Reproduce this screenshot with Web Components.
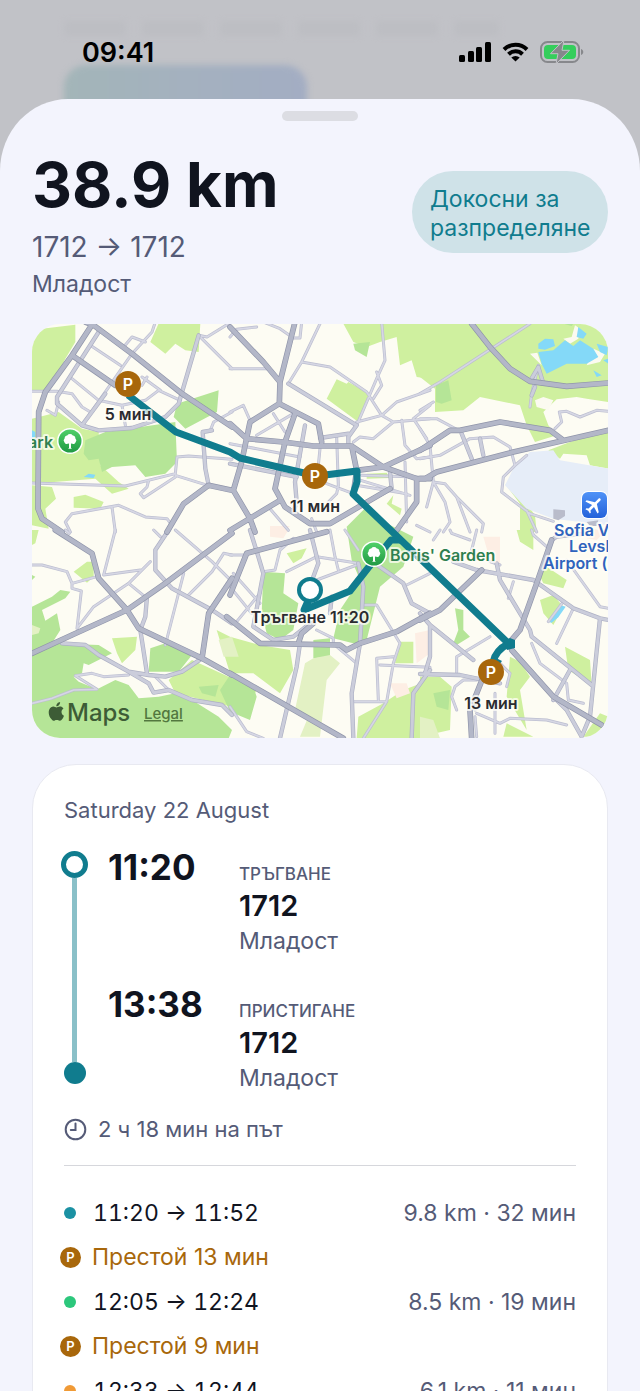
<!DOCTYPE html>
<html lang="bg">
<head>
<meta charset="UTF-8">
<meta name="viewport" content="width=device-width, initial-scale=1">
<title>Пътуване</title>
<style>
  body {
    margin: 0;
    font-family: Inter, "Noto Sans", sans-serif;
    --ink: #10141f;
    --muted: #555b77;
    --teal: #107c8e;
    --amber: #a8670b;
    --page: #f3f4fd;
  }
</style>
</head>
<body>
<trip-screen>
  <status-bar slot="status" time="09:41"></status-bar>
  <trip-header distance="38.9 km" route="1712 → 1712" area="Младост">Докосни за разпределяне</trip-header>
  <trip-map></trip-map>
  <trip-card date="Saturday 22 August" duration="2 ч 18 мин на път">
    <trip-point slot="point" time="11:20" label="Тръгване" place="1712" area="Младост"></trip-point>
    <trip-point slot="point" time="13:38" label="Пристигане" place="1712" area="Младост"></trip-point>
    <trip-leg color="#1b91a3" times="11:20 → 11:52">9.8 km · 32 мин</trip-leg>
    <trip-stop>Престой 13 мин</trip-stop>
    <trip-leg color="#2cc77c" times="12:05 → 12:24">8.5 km · 19 мин</trip-leg>
    <trip-stop>Престой 9 мин</trip-stop>
    <trip-leg color="#f09a36" times="12:33 → 12:44">6.1 km · 11 мин</trip-leg>
  </trip-card>
</trip-screen>

<script>
// Map geometry. Every tile is 200x210 and is drawn in thirds of a unit.
const TILES = [
  {
    x: 32, y: 322,
    light: ['0,60 30,20 130,8 130,60 100,110 70,170 40,205 0,205', '380,4 505,4 500,90 460,85 430,65 400,95 355,60', '0,290 80,270 150,320 200,330 205,430 260,480 290,500 240,515 190,470 0,485', '125,525 160,518 215,540 205,560 125,557', '0,490 60,495 72,530 40,560 50,620 0,610'],
    mid: ['160,355 220,330 430,300 435,420 400,455 340,465 310,430 240,435 210,450 200,410 170,415 155,395', '435,245 560,205 555,270 460,320 425,285'],
    water: ['155,465 170,455 190,458 185,468', '0,325 10,330 10,345 0,350'],
    minor: ['370,0 360,30 300,95 150,310', '175,70 265,130', '275,75 300,45 340,60', '120,170 200,235 270,250 340,235 380,205 445,235', '330,165 385,205', '270,250 280,310', '0,208 75,208 120,215 150,255 175,270', '0,483 280,492 430,455 435,405 470,402 600,412', '430,460 520,488', '350,475 345,495 325,515 335,527 430,465', '115,630 100,600 120,575 260,550 340,585 405,590 420,610', '240,555 250,630', '500,40 560,100 600,140', '500,40 525,45 590,5', '45,265 70,280 80,240', '535,325 545,300 600,270', '345,165 330,190'],
    medium: ['200,30 75,225 75,245 150,310 200,325 300,318 400,285 440,245 500,40', '530,490 520,440 512,330 540,325', '220,215 150,310'],
    major: ['180,8 120,100 40,210 20,270 18,560 30,590 90,630', '160,0 185,10 300,95 450,215 600,315', '120,100 250,190', '405,630 455,545 530,490 600,505'],
  },
  {
    x: 230, y: 322,
    light: ['340,5 600,5 600,170 560,165 545,115 510,130 500,45 450,60 410,75 370,60', '410,455 470,452 480,468 410,470', '490,520 470,545 510,580 515,560 485,545', '320,172 350,185 355,180 418,215 385,300 290,230'],
    mid: ['370,65 420,60 410,105 375,85'],
    pink: ['120,612 180,612 160,630 120,630'],
    minor: ['270,5 215,120 175,185', '215,120 300,135 410,210 455,280 490,300 600,290', '455,0 465,115 440,170 380,310', '440,150 455,190 430,230', '0,140 110,140', '0,45 20,22 80,15', '100,0 150,20 190,48 210,48 215,0', '0,270 40,250 60,295', '80,340 190,275', '130,275 165,330', '380,300 455,280 500,240 600,205', '370,360 390,345 430,350 490,300', '515,295 525,370 560,410 600,405', '550,290 590,350', '550,290 600,250', '270,380 260,480', '320,345 325,490', '375,470 540,520', '380,490 530,515', '395,460 560,465', '525,420 530,600', '250,470 370,515', '295,540 320,515 325,490', '120,560 175,625', '560,610 600,630', '245,590 260,630', '0,365 210,405'],
    medium: ['175,185 380,310 355,345 355,372', '270,348 355,335', '225,310 195,480 200,540 190,570', '0,425 200,465', '480,450 485,500 400,545'],
    major: ['0,15 100,120 150,180', '195,0 175,80 150,180 148,245 60,300 35,420 10,505 60,590 75,630', '148,245 265,305 275,360', '0,305 50,350 160,360 250,372 365,372 460,435 560,470 600,470', '195,275 165,360 135,500 165,555 240,605 300,605 480,500', '0,625 150,535', '380,445 460,435 600,370', '365,372 380,445 370,515', '560,470 560,540 500,625'],
  },
  {
    x: 420, y: 322,
    light: ['0,5 565,5 565,240 500,230 470,225 410,232 370,270 385,310 410,340 345,360 320,310 300,250 180,225 130,265 45,270 45,200 0,165', '385,385 450,360 565,320 565,440 510,430 500,400 430,395 420,410', '255,485 320,545 345,580 350,630 300,630 300,545', '285,440 320,395 325,415 300,450'],
    mid: ['48,190 85,175 95,235 65,245 48,240', '430,5 460,5 455,12'],
    land: ['465,10 480,20 475,50 450,65 430,50 455,45', '330,95 352,92 365,130', '520,80 555,95 540,120 500,130', '370,225 400,235 385,265 350,255 345,235'],
    airport: ['330,390 400,385 420,415 565,440 565,610 400,590 320,560 255,490 285,430'],
    water: ['355,90 400,85 435,55 460,72 480,55 520,80 535,105 500,125 440,125 380,155 365,125', '355,65 375,50 400,52 405,72 375,83 355,80', '475,15 500,35 490,50 470,45', '530,65 565,75 560,100 540,90', '520,145 545,160 530,165', '550,115 565,110 565,125'],
    pink: ['500,630 520,620 560,630'],
    minor: ['330,5 60,180 0,215', '0,290 50,290 125,330', '355,130 335,215 330,255', '0,265 40,240', '405,320 425,300 418,270 440,268 480,285 530,265 565,268', '0,410 60,400 150,350 220,345 270,375 285,430', '320,400 285,430 250,465 245,510 330,575 400,598', '320,565 350,630', '0,320 30,370 40,480 75,540 90,600 70,630', '40,480 20,555', '40,480 75,485 110,525 190,605 185,630', '110,525 150,630'],
    medium: ['125,335 155,410', '180,350 190,400', '355,135 330,178', '355,135 370,185', '345,195 335,220'],
    building: ['400,562 435,565 435,582 415,595 400,590', '500,600 535,595 530,612 510,612'],
    major: ['155,5 210,75 270,140 330,178 440,193 565,183', '0,470 15,470 50,450 280,390 565,325', '0,385 90,325 120,325 240,300 390,325 430,355'],
  },
  {
    x: 32, y: 530,
    light: ['125,125 165,95 185,95 185,140 165,158', '240,325 315,320 310,360 270,400 255,370', '480,390 590,440 680,470 640,540 430,490 410,450', '0,0 20,0 10,40 0,45'],
    mid: ['0,375 0,230 60,200 85,180 115,185 100,205 30,240 40,272 75,250 85,300 60,340 200,345 240,370 170,405 155,400 150,430 125,440 140,455 195,478 250,450 290,465 320,505 380,500 430,490 480,510 560,560 600,600 590,625 0,625', '355,355 400,340 480,375 440,425 350,425', '500,470 560,465 550,500 510,490', '0,135 10,140 0,150'],
    olive: ['560,330 600,320 620,380 575,380', '0,285 25,295 20,310 0,315'],
    minor: ['0,105 30,105 105,125 120,160 195,140', '120,160 120,175 148,183 135,295 185,230 290,160 355,95', '250,0 215,135 325,120', '290,160 345,205', '455,130 400,345', '430,0 540,95 600,155', '600,75 575,70 540,125 465,200', '365,0 385,20', '0,520 60,505 125,480 195,478 130,437 180,430 215,440 290,435', '370,440 410,480', '100,0 112,10'],
    medium: ['410,0 370,60 370,120 420,175 540,240 600,280', '345,200 340,260 325,300 345,430', '90,340 160,345 200,375 290,425 350,435 400,440 450,425 510,385', '290,425 350,460 365,488 410,480 480,510 570,525 600,555'],
    major: ['70,0 180,70 200,145 285,240 320,295 510,385 600,435', '0,370 120,315 285,240 400,160 600,10', '600,145 530,250 510,385'],
  },
  {
    x: 230, y: 530,
    light: ['170,70 230,55 215,85 190,100', '-40,300 0,320 90,345 180,360 190,420 150,490 70,430 0,430', '385,560 460,520 520,480 600,450 600,625 380,625', '510,335 550,335 550,400 495,400'],
    mid: ['100,125 165,130 160,190 205,220 190,300 150,330 110,310 95,250', '350,-10 410,-70 450,-30 550,20 520,110 450,170 410,330 390,345 310,325 330,240 390,150 365,90', '0,435 70,470 80,500 60,570 0,545 -30,480', '250,330 300,325 300,380 250,385'],
    olive: ['225,400 250,385 300,375 330,400 290,450 270,620 210,620 235,560 195,540'],
    pink: ['120,0 175,0 160,25 120,20', '480,460 530,460 540,490 500,505', '555,310 600,300 600,370 560,400'],
    minor: ['190,25 150,60 135,120 100,125', '170,125 260,80 385,100', '260,150 380,105', '300,0 315,80 325,120', '0,75 50,75', '345,0 385,60', '10,130 90,220', '0,170 65,250', '90,190 20,275', '400,225 440,225 510,340 490,400 470,515 370,515', '445,510 440,385 490,380', '450,405 600,412', '320,350 380,400', '470,515 400,625', '0,530 50,605 100,625', '600,130 530,165', '260,300 310,325 310,345'],
    medium: ['240,0 265,100 250,140', '60,0 85,80 100,130 70,290 130,330 190,320 240,280', '210,340 200,410 150,625', '385,100 400,170 390,340 365,490 370,625', '600,420 550,490 545,625', '420,90 520,160 545,220 600,250', '300,250 305,200'],
    major: ['0,430 340,625', '-10,260 90,340 330,345 350,360 390,340 500,305 600,250', '0,195 50,70 290,5', '205,340 215,310 250,280'],
  },
  {
    x: 420, y: 530,
    light: ['290,0 340,0 340,60 300,35', '380,110 440,150 430,175 370,160 355,130', '360,210 400,195 430,230 400,285 370,250', '435,350 510,390 515,465 445,420', '270,380 300,395 330,440 300,480 320,600 260,500', '540,550 565,560 565,620 490,620', '260,580 340,620 250,620', '0,440 60,440 95,470 90,600 0,620'],
    mid: ['105,235 130,240 130,300 150,320 110,345 100,340 115,300', '40,490 90,480 85,540 50,530'],
    olive: ['0,560 40,570 60,625 0,625'],
    pink: ['0,310 20,310 20,370 0,380', '190,20 240,20 240,100 210,90', '490,0 560,0 530,30 500,25'],
    water: ['383,275 400,250 410,245 420,225 437,230 415,262 395,278'],
    minor: ['280,155 265,205', '430,215 385,275', '460,235 410,340', '335,340 360,400 440,460 445,510 490,520', '210,320 110,380 110,430', '110,540 95,500 105,470 130,450 170,450', '240,400 270,430 260,470', '170,495 165,540', '225,490 225,610', '170,550 240,580 270,565 380,570 440,585', '240,105 210,95', '90,0 95,10 150,30', '155,60 170,0', '380,50 340,15 335,0', '440,90 540,230 565,235', '165,560 170,620', '60,0 40,30'],
    medium: ['100,95 170,120 340,150 460,235 540,265 565,270', '540,265 510,560 485,620', '230,100 240,150 330,300 335,320 515,465', '0,250 30,285 160,390', '30,285 30,380 15,430', '0,432 120,435 240,460', '395,30 410,20 500,10', '450,420 400,510', '400,500 440,540 485,620'],
    major: ['395,30 350,160 300,300 270,335 275,360 400,500 545,585', '0,270 60,240 185,120', '155,625 150,540 190,440'],
  },
];

const AREA_FILLS = { light: '#cff09f', mid: '#b5e597', olive: '#e3f1c4', pink: '#fdeee4', airport: '#e6edf8', land: '#fbfaf0', water: '#84d9f8', building: '#b9bccb' };
const ROAD_STYLES = {
  minor: { edge: '#bcbed0', fill: '#d6d7e4', width: 9 },
  medium: { edge: '#adb0c4', fill: '#cbcddb', width: 13 },
  major: { edge: '#9095aa', fill: '#b3b7c8', width: 17 },
};

function tilePath(tile, points, attrs) {
  const d = points.map(p => 'M' + p).join('');
  return `<path transform="translate(${tile.x} ${tile.y}) scale(.33333)" d="${d}" ${attrs}/>`;
}

function drawAreas() {
  let out = '';
  for (const [kind, fill] of Object.entries(AREA_FILLS)) {
    for (const tile of TILES) {
      if (tile[kind]) out += tilePath(tile, tile[kind].map(p => p + 'Z'), `fill="${fill}"`);
    }
  }
  return out;
}

function drawRoads() {
  let out = '';
  for (const [kind, road] of Object.entries(ROAD_STYLES)) {
    for (const tile of TILES) {
      out += tilePath(tile, tile[kind], `stroke="${road.edge}" stroke-width="${road.width}"`);
    }
    for (const tile of TILES) {
      out += tilePath(tile, tile[kind], `stroke="${road.fill}" stroke-width="${road.width - 4}"`);
    }
  }
  return `<g fill="none" stroke-linejoin="round" stroke-linecap="round">${out}</g>`;
}

class TripScreen extends HTMLElement {
  constructor() {
    super();
    this.attachShadow({ mode: 'open' });
    this.shadowRoot.innerHTML = `
      <style>
        :host {
          display: flex;
          flex-direction: column;
          position: relative;
          height: 100vh;
          overflow: hidden;
          background: #c1c2c7;
        }
        .behind {
          position: absolute;
          filter: blur(3px);
        }
        .tile {
          left: 10%;
          top: 65px;
          width: 38%;
          height: 90px;
          border-radius: 22px;
          background: linear-gradient(90deg, #a3b5b8, #a4b1bf 50%, #a3adc3);
        }
        .line {
          left: 10%;
          top: 21px;
          width: 68%;
          height: 15px;
          background: repeating-linear-gradient(90deg, #b9babf 0 62px, transparent 62px 78px);
          opacity: .5;
        }
        main {
          position: relative;
          flex: 1;
          min-height: 0;
          overflow: hidden;
          border-radius: 68px 68px 0 0 / 72px 72px 0 0;
          background: var(--page);
        }
        .grabber {
          width: 76px;
          height: 10px;
          margin: 12px auto 0;
          border-radius: 5px;
          background: #dcdde3;
        }
        .content {
          display: flex;
          flex-direction: column;
          gap: 26px;
          padding: 32px;
        }
      </style>
      <div class="behind line"></div>
      <div class="behind tile"></div>
      <slot name="status"></slot>
      <main>
        <div class="grabber"></div>
        <div class="content"><slot></slot></div>
      </main>
    `;
  }
}

class StatusBar extends HTMLElement {
  connectedCallback() {
    this.attachShadow({ mode: 'open' });
    this.shadowRoot.innerHTML = `
      <style>
        :host {
          display: flex;
          position: relative;
          justify-content: space-between;
          align-items: center;
          height: 99px;
          box-sizing: border-box;
          padding: 5px 56px 0 82px;
          color: #000;
          font-size: 27px;
          font-weight: 600;
        }
        .icons { display: flex; align-items: center; gap: 11px; }
        svg { display: block; }
      </style>
      <span>${this.getAttribute('time')}</span>
      <div class="icons">
        <svg width="32" height="20" viewBox="0 0 32 20">
          <rect x="0" y="13" width="6" height="7" rx="1.5"/>
          <rect x="9" y="9" width="6" height="11" rx="1.5"/>
          <rect x="17" y="5" width="6" height="15" rx="1.5"/>
          <rect x="26" y="0" width="6" height="20" rx="1.5"/>
        </svg>
        <svg width="27" height="20" viewBox="0 0 27 20">
          <path d="M2 7.5a16.5 16.5 0 0 1 23 0M6.5 12.2a10 10 0 0 1 14 0" fill="none" stroke="#000" stroke-width="4"/>
          <path d="M13.5 19.5 9.3 15.6a6 6 0 0 1 8.4 0z"/>
        </svg>
        <svg width="44" height="24" viewBox="0 0 44 24">
          <rect x="1" y="2" width="38" height="20" rx="6.5" fill="none" stroke="#87888c" stroke-width="2"/>
          <rect x="4" y="5" width="32" height="14" rx="4" fill="#35ce5c"/>
          <path d="M41 9c3 1 3 5 0 6z" fill="#87888c"/>
          <path d="M24 0 10.5 13.7H18L16 24l13.5-13.7H22z" fill="#87888c" stroke="#c1c2c7" stroke-width="1"/>
        </svg>
      </div>
    `;
  }
}

class TripHeader extends HTMLElement {
  connectedCallback() {
    this.attachShadow({ mode: 'open' });
    this.shadowRoot.innerHTML = `
      <style>
        :host {
          display: flex;
          justify-content: space-between;
          align-items: flex-start;
          color: var(--muted);
        }
        h1 {
          margin: 0;
          color: var(--ink);
          font-size: 62px;
          line-height: 64px;
          font-weight: 700;
        }
        p { margin: 0; font-size: 23px; line-height: 28px; }
        .route { margin: 12px 0 5px; font-size: 28px; line-height: 36px; }
        button {
          width: 196px;
          margin-top: 18px;
          padding: 14px 18px 10px;
          border: 0;
          border-radius: 41px;
          background: #cfe2e8;
          color: var(--teal);
          font: inherit;
          font-size: 23px;
          line-height: 29px;
          text-align: left;
        }
      </style>
      <div>
        <h1>${this.getAttribute('distance')}</h1>
        <p class="route">${this.getAttribute('route')}</p>
        <p>${this.getAttribute('area')}</p>
      </div>
      <button type="button"><slot></slot></button>
    `;
  }
}

class TripMap extends HTMLElement {
  connectedCallback() {
    this.attachShadow({ mode: 'open' });
    const parking = (x, y) => `
      <circle cx="${x}" cy="${y}" r="13" fill="#a8670b"/>
      <text x="${x}" y="${y + 6}" class="p">P</text>`;
    const tree = (x, y) => `
      <g transform="translate(${x} ${y})">
        <circle r="13" fill="#fff"/>
        <circle r="11.5" fill="url(#leaf)"/>
        <path fill="#fff" d="M-1 7V2.5l-1.5.2A2.5 2.5 0 0 1-5.7 1a2.5 2.5 0 0 1 .3-3.5A3 3 0 0 1-2.8-5.6a3.6 3.6 0 0 1 5.6 0A3 3 0 0 1 5.4-2.5 2.5 2.5 0 0 1 5.7 1a2.5 2.5 0 0 1-3.2 1.7L1 2.5V7l1 .8h-4z"/>
      </g>`;
    this.shadowRoot.innerHTML = `
      <style>
        :host {
          display: block;
          overflow: hidden;
          border-radius: 28px;
          background: #fdfcf3;
        }
        svg { display: block; width: 100%; height: auto; }
        text { font-weight: 600; font-size: 16px; fill: #2a2b30; }
        .halo text { paint-order: stroke; stroke: #fffef8; stroke-width: 4px; stroke-opacity: .75; stroke-linejoin: round; }
        .mid { text-anchor: middle; }
        .p { text-anchor: middle; fill: #fff; }
        .park text { fill: #2f8050; }
        .port text { fill: #2f63bd; }
        .maps { font-size: 24px; font-weight: 500; fill: #3d5c36; }
        a text { fill: #52773f; font-size: 15px; font-weight: 500; text-decoration: underline; text-underline-offset: 3px; }
      </style>
      <svg viewBox="32 324 576 414" role="group" aria-label="Map">
        <defs>
          <linearGradient id="leaf" x2="0" y2="1"><stop stop-color="#4fd068"/><stop offset="1" stop-color="#209a44"/></linearGradient>
          <linearGradient id="sky" x2="0" y2="1"><stop stop-color="#4f92f7"/><stop offset="1" stop-color="#2462da"/></linearGradient>
        </defs>
        ${drawAreas()}
        ${drawRoads()}
        <g fill="none" stroke="#107c8e" stroke-width="7" stroke-linejoin="round">
          <path d="M128 395 176 432 230 452 240 458 304 473 325 475 357 471 357 482 353 494 508 643"/>
          <path d="M400 540 391 540 368 568 350 591 304 610 308 601"/>
          <path d="M508 644Q496 650 493 662"/>
        </g>
        <path d="M504 641l6-3 5 2v8l-8 2zM494 657l8 4-4 5z" fill="#107c8e"/>
        <circle cx="310" cy="590" r="11" fill="#fff" stroke="#107c8e" stroke-width="4"/>
        ${parking(128, 384)}
        ${parking(315, 476)}
        ${parking(491, 672)}
        ${tree(70, 441)}
        ${tree(374, 554)}
        <rect x="581" y="491" width="27" height="28" rx="7" fill="#fff"/>
        <rect x="582" y="492" width="25" height="26" rx="6" fill="url(#sky)"/>
        <path transform="translate(594 505) rotate(45) scale(.9) translate(-11.5 -12)" fill="#fff" d="M21 16v-2l-8-5V3.5c0-.83-.67-1.5-1.5-1.5S10 2.67 10 3.5V9l-8 5v2l8-2.5V19l-2 1.5V22l3.5-1 3.5 1v-1.5L13 19v-5.5l8 2.5z"/>
        <g class="halo">
          <text class="mid" x="128" y="420">5 мин</text>
          <text class="mid" x="315" y="512">11 мин</text>
          <text class="mid" x="491" y="709">13 мин</text>
          <text class="mid" x="310" y="623">Тръгване 11:20</text>
        </g>
        <g class="halo park">
          <text x="53" y="448" text-anchor="end">Park</text>
          <text x="390" y="561">Boris' Garden</text>
        </g>
        <g class="halo port">
          <text x="554" y="536">Sofia V</text>
          <text x="569" y="552">Levsk</text>
          <text x="543" y="569">Airport (</text>
        </g>
        <path transform="translate(47 702) scale(.78)" fill="#3d5c36" d="M12.152 6.896c-.948 0-2.415-1.078-3.96-1.04-2.04.027-3.91 1.183-4.961 3.014-2.117 3.675-.546 9.103 1.519 12.09 1.013 1.454 2.208 3.09 3.792 3.039 1.52-.065 2.09-.987 3.935-.987 1.831 0 2.35.987 3.96.948 1.637-.026 2.676-1.48 3.676-2.948 1.156-1.688 1.636-3.325 1.662-3.415-.039-.013-3.182-1.221-3.22-4.857-.026-3.04 2.48-4.494 2.597-4.559-1.429-2.09-3.623-2.324-4.39-2.376-2-.156-3.675 1.09-4.61 1.09zM15.53 3.83c.843-1.012 1.4-2.427 1.245-3.83-1.207.052-2.662.805-3.532 1.818-.78.896-1.454 2.338-1.273 3.714 1.338.104 2.715-.688 3.559-1.701"/>
        <text class="maps" x="67" y="721">Maps</text>
        <a href="#legal"><text x="144" y="719">Legal</text></a>
      </svg>
    `;
  }
}

class TripCard extends HTMLElement {
  connectedCallback() {
    this.attachShadow({ mode: 'open' });
    this.shadowRoot.innerHTML = `
      <style>
        :host {
          display: block;
          padding: 30px 31px;
          border: 1px solid #e8e9f1;
          border-radius: 44px;
          background: #fff;
          color: var(--muted);
          font-size: 23px;
          line-height: 30px;
        }
        .date, .duration { font-size: 22px; }
        .points { display: flex; gap: 20px; margin: 26px 0 22px -3px; }
        .rail { display: flex; flex-direction: column; align-items: center; width: 27px; padding-bottom: 8px; }
        .start { width: 17px; height: 17px; border: 5px solid var(--teal); border-radius: 50%; }
        .bar { flex: 1; width: 5px; background: #8ac0c8; }
        .end { width: 22px; height: 22px; border-radius: 50%; background: var(--teal); }
        .stack { flex: 1; display: flex; flex-direction: column; gap: 33px; }
        .duration { display: flex; align-items: center; gap: 11px; padding-bottom: 21px; border-bottom: 1px solid #d6d7dc; }
        .legs { display: flex; flex-direction: column; margin-top: 24px; }
      </style>
      <div class="date">${this.getAttribute('date')}</div>
      <div class="points">
        <div class="rail"><div class="start"></div><div class="bar"></div><div class="end"></div></div>
        <div class="stack"><slot name="point"></slot></div>
      </div>
      <div class="duration">
        <svg width="23" height="23" viewBox="0 0 23 23" fill="none" stroke="currentColor" stroke-width="2" stroke-linecap="round">
          <circle cx="11.5" cy="11.5" r="9.8"/>
          <path d="M11.5 5.5V12H6.8"/>
        </svg>
        <span>${this.getAttribute('duration')}</span>
      </div>
      <div class="legs"><slot></slot></div>
    `;
  }
}

class TripPoint extends HTMLElement {
  connectedCallback() {
    this.attachShadow({ mode: 'open' });
    this.shadowRoot.innerHTML = `
      <style>
        :host { display: grid; grid-template-columns: 115px 1fr; column-gap: 16px; align-items: baseline; }
        .time, .place { color: var(--ink); }
        .time { font-size: 35px; line-height: 32px; font-weight: 700; }
        .label { font-size: 17px; line-height: 22px; font-weight: 500; text-transform: uppercase; }
        .place { font-size: 29px; line-height: 42px; font-weight: 600; }
        .area { line-height: 28px; }
      </style>
      <div class="time">${this.getAttribute('time')}</div>
      <div>
        <div class="label">${this.getAttribute('label')}</div>
        <div class="place">${this.getAttribute('place')}</div>
        <div class="area">${this.getAttribute('area')}</div>
      </div>
    `;
  }
}

class TripLeg extends HTMLElement {
  connectedCallback() {
    this.attachShadow({ mode: 'open' });
    this.shadowRoot.innerHTML = `
      <style>
        :host { display: flex; align-items: center; height: 45px; }
        .dot { width: 12px; height: 12px; margin-right: 17px; border-radius: 50%; background: ${this.getAttribute('color')}; }
        .times { flex: 1; color: var(--ink); font-variant-numeric: tabular-nums; }
      </style>
      <span class="dot"></span>
      <span class="times">${this.getAttribute('times')}</span>
      <slot></slot>
    `;
  }
}

class TripStop extends HTMLElement {
  connectedCallback() {
    this.attachShadow({ mode: 'open' });
    this.shadowRoot.innerHTML = `
      <style>
        :host { display: flex; align-items: center; gap: 11px; height: 44px; margin-left: -4px; color: var(--amber); }
        .badge {
          width: 21px;
          height: 21px;
          border-radius: 50%;
          background: var(--amber);
          color: #fff;
          font-size: 13px;
          line-height: 21px;
          font-weight: 600;
          text-align: center;
        }
      </style>
      <span class="badge">P</span>
      <slot></slot>
    `;
  }
}

customElements.define('trip-screen', TripScreen);
customElements.define('status-bar', StatusBar);
customElements.define('trip-header', TripHeader);
customElements.define('trip-map', TripMap);
customElements.define('trip-card', TripCard);
customElements.define('trip-point', TripPoint);
customElements.define('trip-leg', TripLeg);
customElements.define('trip-stop', TripStop);
</script>
</body>
</html>
